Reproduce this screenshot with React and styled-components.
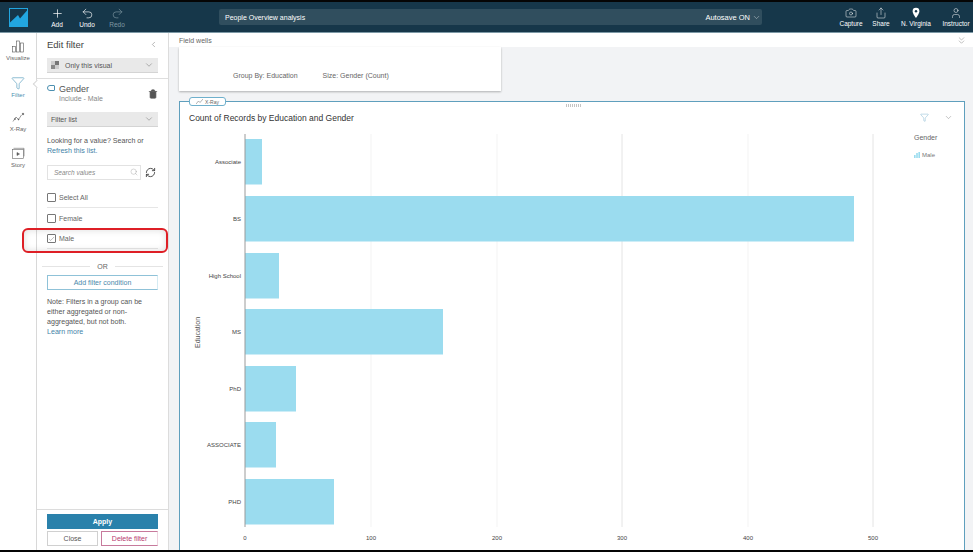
import React from 'react';
import styled, { createGlobalStyle } from 'styled-components';
import { Plus, Undo2, Redo2, ChevronDown, ChevronLeft, ChevronsDown, Camera, Share, User, Filter, Trash2, Search, RefreshCw, Check } from 'lucide-react';

const Global = createGlobalStyle`
  html, body { margin: 0; padding: 0; height: 552px; overflow: hidden; background: #fff; }
  body { font-family: "Liberation Sans", Arial, sans-serif; color: #444; -webkit-font-smoothing: antialiased; }
  * { box-sizing: border-box; }
`;

const Page = styled.div`
  width: 973px; height: 552px; display: flex; flex-direction: column;
  border-top: 2px solid #050505; border-bottom: 2px solid #050505; overflow: hidden;
`;
const Header = styled.header`
  height: 31px; flex: none; background: #16374a; border-bottom: 1px solid #7d99a6;
  display: flex; align-items: center; color: #fff;
`;
const Logo = styled.svg`width: 19px; height: 19px; margin-left: 9px; margin-right: 14px; flex: none;`;
const HeadAction = styled.div`
  width: ${p => p.$w || 30}px; display: flex; flex-direction: column; align-items: center; gap: 1px;
  font-size: 6.5px; line-height: 7px; color: ${p => p.$off ? '#7f97a3' : '#fff'}; white-space: nowrap;
`;
const TitleBar = styled.div`
  width: 543px; height: 16px; margin-left: 87px; background: #304e5e; border-radius: 2px;
  display: flex; align-items: center; justify-content: space-between; padding: 0 1px 0 6px;
  font-size: 7px; color: #fff;
`;
const Autosave = styled.span`display: flex; align-items: center; gap: 2px; font-size: 7.5px;`;
const HeadRight = styled.div`margin-left: auto; display: flex;`;

const Body = styled.div`flex: 1; display: flex; min-height: 0;`;
const Rail = styled.nav`
  position: relative; z-index: 1;
  width: 37px; flex: none; background: #fff; border-right: 1px solid #d8d8d8;
  display: flex; flex-direction: column; align-items: center; padding-top: 7px; gap: 12.7px;
`;
const RailNotch = styled.span`
  position: absolute; right: -4px; top: 48px; width: 6px; height: 6px; background: #fff;
  border-left: 1px solid #d8d8d8; border-bottom: 1px solid #d8d8d8; transform: rotate(45deg);
`;
const RailItem = styled.div`
  display: flex; flex-direction: column; align-items: center; gap: 2px; height: 23px;
  font-size: 6px; line-height: 7px; color: ${p => p.$active ? '#4b8fb0' : '#666'};
`;
const Panel = styled.aside`
  width: 132px; flex: none; background: #fff; border-right: 1px solid #dcdcdc;
  display: flex; flex-direction: column; font-size: 7px; color: #555;
`;
const PanelInner = styled.div`padding: 0 10px; `;
const PanelHead = styled.div`
  height: 25px; padding: 0 10px 2px; display: flex; align-items: center; justify-content: space-between;
  font-size: 9.5px; color: #444;
`;
const SelectBox = styled.div`
  height: 15px; margin-top: ${p => p.$top || 0}px; background: #e9e9e9; display: flex; align-items: center; justify-content: space-between;
  padding: 0 4px; font-size: 7px; color: #555; border-bottom: 1px solid #d4d4d4;
`;
const SelectLabel = styled.span`display: flex; align-items: center; gap: 6px;`;
const Swatch = styled.span`
  width: 8px; height: 8px; flex: none;
  background: conic-gradient(#777 0 25%, #ccc 0 50%, #888 0 75%, #ccc 0);
`;
const Divider = styled.div`height: 1px; background: #dedede; margin-top: 5px;`;
const FilterHead = styled.div`
  display: flex; justify-content: space-between; align-items: center; padding: 2px 10px 0; height: 28px;
`;
const FieldTitle = styled.div`font-size: 9px; line-height: 10px; color: #555; display: flex; align-items: center; gap: 4px;`;
const FieldTag = styled.span`width: 8px; height: 6px; border: 1px solid #4b8fb0; border-radius: 3px 1px 1px 3px; display: block; margin-top: -2px;`;
const FieldSub = styled.div`font-size: 7px; line-height: 10px; color: #888; margin-left: 12px;`;
const Para = styled.p`margin: ${p => p.$m || 0}; font-size: 7.1px; line-height: 9.8px; color: #555;`;
const LinkText = styled.span`color: #3f83a8;`;
const SearchRow = styled.div`display: flex; align-items: center; margin-top: 8px; gap: 4px;`;
const SearchBox = styled.div`
  width: 94px; height: 15px; border: 1px solid #e2e2e2; display: flex; align-items: center; justify-content: space-between;
  padding: 0 2px 0 6px; font-style: italic; font-size: 6.5px; color: #888;
`;
const CheckList = styled.div`margin-top: 8px;`;
const CheckRow = styled.div`
  position: relative; display: flex; align-items: center; gap: 3px; height: 20.6px; font-size: 7px; color: #666;
  border-bottom: ${p => p.$line ? '1px solid #e6e6e6' : 'none'};
`;
const Box = styled.span`
  width: 9px; height: 9px; border: 1px solid #777; border-radius: 1px; display: flex; align-items: center; justify-content: center; flex: none; color: #444;
`;
const Highlight = styled.div`
  position: absolute; z-index: 2; left: -25px; right: -10px; top: -1px; height: 25px;
  border: 2px solid #de1f26; border-radius: 6px;
  box-shadow: inset 0 0 7px rgba(0,0,0,.14);
  pointer-events: none;
`;
const OrLine = styled.div`
  display: flex; align-items: center; gap: 7px; margin: 13px -5px 0; font-size: 7px; line-height: 9px; color: #666;
  &::before, &::after { content: ''; flex: 1; height: 1px; background: #e4e4e4; }
`;
const AddButton = styled.div`
  height: 15px; margin-top: 4px; border: 1px solid #8fc2d8; border-right-color: #d5ebf3; display: flex; align-items: center; justify-content: center;
  font-size: 7px; color: #4a88aa;
`;
const PanelFoot = styled.div`
  margin-top: auto; border-top: 1px solid #dcdcdc; padding: 4px 10px 4px; display: flex; flex-direction: column; gap: 2px;
`;
const ApplyBtn = styled.div`
  height: 15px; background: #2a81ab; color: #fff; font-size: 7px; font-weight: 700; display: flex; align-items: center; justify-content: center;
`;
const FootRow = styled.div`display: flex; gap: 3px;`;
const FootBtn = styled.div`
  flex: ${p => p.$grow}; height: 15px; border: 1px solid ${p => p.$danger ? '#c77a9c' : '#d0d0d0'};
  border-right-color: ${p => p.$danger ? '#eed4e0' : '#d0d0d0'};
  color: ${p => p.$danger ? '#b83a70' : '#555'}; font-size: 7px; display: flex; align-items: center; justify-content: center;
`;

const Main = styled.main`flex: 1; min-width: 0; background: #f2f3f5; display: flex; flex-direction: column;`;
const WellsBar = styled.div`
  height: 14px; flex: none; background: #fff; display: flex; align-items: center; justify-content: space-between;
  padding: 0 6px 0 10px; font-size: 7px; color: #666;
`;
const Canvas = styled.div`flex: 1; padding: 0 8px 0 10px; display: flex; flex-direction: column; min-height: 0;`;
const WellsCard = styled.div`
  width: 322px; height: 44px; flex: none; background: #fff; box-shadow: 0 1px 2px rgba(0,0,0,.28);
  display: flex; gap: 25px; padding: 24px 0 0 54px; font-size: 7px; line-height: 9px; color: #666;
`;
const ChartCard = styled.section`
  position: relative; flex: 1; margin-top: 10px; background: #fff; border: 1px solid #5f9fbd; border-bottom: none;
  display: flex; flex-direction: column; min-height: 0;
`;
const XRayTag = styled.div`
  position: absolute; left: 9px; top: -5px; width: 37px; height: 9px; background: #fff; border: 1px solid #6fb0cc; border-radius: 3px;
  display: flex; align-items: center; justify-content: center; gap: 2px; font-size: 5px; color: #666;
`;
const Grip = styled.div`
  position: absolute; left: 386px; top: 2px; width: 16px; height: 3px;
  background: repeating-linear-gradient(90deg, #c4c4c4 0 1px, transparent 1px 2px);
`;
const CardHead = styled.div`
  height: 23px; margin-top: 4px; padding: 0 11px 0 9px; flex: none; display: flex; align-items: center; justify-content: space-between;
  font-size: 8.5px; color: #333;
`;
const CardTools = styled.div`display: flex; align-items: center; gap: 15px; color: #666;`;
const ChartRow = styled.div`flex: 1; display: flex; min-height: 0;`;
const ChartSvg = styled.svg`width: 725px; height: 423px; flex: none; display: block; font-family: "Liberation Sans", Arial, sans-serif;`;
const Legend = styled.div`padding: 5px 0 0 9px; font-size: 7px; color: #666;`;
const LegendItem = styled.div`display: flex; align-items: center; gap: 2px; margin-top: 11px; font-size: 6px; color: #777;`;
const LegendMark = styled.svg`width: 6px; height: 6px; flex: none;`;

const bars = [
  ['Associate', 139, 17], ['BS', 196, 609], ['High School', 253, 34], ['MS', 309, 198],
  ['PhD', 366, 51], ['ASSOCIATE', 422, 31], ['PHD', 479, 89],
];
const ticks = [[245, '0'], [371, '100'], [497, '200'], [622, '300'], [748, '400'], [873, '500']];

const Chart = () => (
  <ChartSvg viewBox="180 129 725 423">
    {ticks.slice(1).map(([x]) => <line key={x} x1={x} x2={x} y1="134" y2="527" stroke={x === 622 || x === 873 ? '#e4e4e4' : '#f3f3f3'} strokeWidth="1" />)}
    {bars.map(([n, y, w]) => <rect key={n} x="245" y={y} width={w} height="45.5" fill="#9bdcef" />)}
    <line x1="245" x2="245" y1="134" y2="527" stroke="#9a9a9a" strokeWidth="1" />
    {bars.map(([n, y]) => <text key={n} x="241" y={y + 25} textAnchor="end" fontSize="6" fill="#444">{n}</text>)}
    {ticks.map(([x, t]) => <text key={x} x={x} y="540" textAnchor="middle" fontSize="6" fill="#444">{t}</text>)}
    <text transform="translate(200 348) rotate(-90)" fontSize="7" fill="#555">Education</text>
  </ChartSvg>
);

const VisualIcon = () => (
  <svg width="14" height="13" viewBox="0 0 14 13" fill="none" stroke="#555" strokeWidth=".6">
    <rect x="1.5" y="6.5" width="3" height="5.5" /><rect x="5.5" y="1" width="3" height="11" /><rect x="9.5" y="3" width="3" height="9" />
  </svg>
);
const XRayIcon = () => (
  <svg width="14" height="13" viewBox="0 0 14 13" fill="none" stroke="#555" strokeWidth=".6">
    <path d="M2 10.5 L5 6 L7.5 8.5 L10.5 4" /><circle cx="4" cy="8" r=".5" fill="#555" /><circle cx="7.5" cy="8.5" r=".5" fill="#555" /><circle cx="12" cy="3" r=".8" fill="#555" />
  </svg>
);
const StoryIcon = () => (
  <svg width="14" height="13" viewBox="0 0 14 13" fill="none" stroke="#666" strokeWidth=".6">
    <rect x="1.5" y="2.5" width="11" height="9" /><path d="M2.5 1.3h10.5v8" /><path d="M6 5.5l2.5 1.5-2.5 1.5z" fill="#555" />
  </svg>
);
const PinIcon = () => (
  <svg width="12" height="12" viewBox="0 0 12 12">
    <path d="M6 .8a3.4 3.4 0 0 0-3.4 3.4C2.600 6.500 6 11 6 11s3.400-4.500 3.400-6.800A3.400 3.400 0 0 0 6 .8z" fill="#fff" />
    <circle cx="6" cy="4.200" r="1.200" fill="#16374a" />
  </svg>
);

export default function App() {
  return (
    <Page>
      <Global />
      <Header>
        <Logo viewBox="0 0 19 19">
          <rect width="19" height="19" fill="#22a6e0" />
          <path d="M1 1 H18 V2.500 L11 10.500 L9 7 L1 14.500 Z" fill="#16374a" />
        </Logo>
        <HeadAction><Plus size={13} strokeWidth={1.3} />Add</HeadAction>
        <HeadAction><Undo2 size={13} strokeWidth={1.2} />Undo</HeadAction>
        <HeadAction $off><Redo2 size={13} strokeWidth={1.2} />Redo</HeadAction>
        <TitleBar>
          <span>People Overview analysis</span>
          <Autosave>Autosave ON <ChevronDown size={9} strokeWidth={1} /></Autosave>
        </TitleBar>
        <HeadRight>
          <HeadAction $w={36}><Camera size={12} strokeWidth={1} />Capture</HeadAction>
          <HeadAction $w={24}><Share size={12} strokeWidth={1} />Share</HeadAction>
          <HeadAction $w={46}><PinIcon />N. Virginia</HeadAction>
          <HeadAction $w={34}><User size={12} strokeWidth={1} />Instructor</HeadAction>
        </HeadRight>
      </Header>
      <Body>
        <Rail>
          <RailItem><VisualIcon />Visualize</RailItem>
          <RailItem $active><Filter size={14} strokeWidth={1} color="#3f8fb5" />Filter</RailItem>
          <RailItem><XRayIcon />X-Ray</RailItem>
          <RailItem><StoryIcon />Story</RailItem>
          <RailNotch />
        </Rail>
        <Panel>
          <PanelHead>Edit filter <ChevronLeft size={9} strokeWidth={1} /></PanelHead>
          <PanelInner>
            <SelectBox><SelectLabel><Swatch />Only this visual</SelectLabel><ChevronDown size={10} strokeWidth={1} /></SelectBox>
          </PanelInner>
          <Divider />
          <FilterHead>
            <div>
              <FieldTitle><FieldTag />Gender</FieldTitle>
              <FieldSub>Include - Male</FieldSub>
            </div>
            <Trash2 size={10} strokeWidth={1.6} fill="#555" color="#555" />
          </FilterHead>
          <PanelInner>
            <SelectBox $top={5}>Filter list<ChevronDown size={10} strokeWidth={1} /></SelectBox>
            <Para $m="10px 0 0">Looking for a value? Search or<br /><LinkText>Refresh this list.</LinkText></Para>
            <SearchRow>
              <SearchBox>Search values <Search size={8} strokeWidth={1} /></SearchBox>
              <RefreshCw size={11} strokeWidth={2} color="#444" />
            </SearchRow>
            <CheckList>
              <CheckRow $line><Box />Select All</CheckRow>
              <CheckRow><Box />Female</CheckRow>
              <CheckRow $line><Box><Check size={8} strokeWidth={1.2} /></Box>Male<Highlight /></CheckRow>
            </CheckList>
            <OrLine>OR</OrLine>
            <AddButton>Add filter condition</AddButton>
            <Para $m="8px 0 0">Note: Filters in a group can be<br />either aggregated or non-<br />aggregated, but not both.<br /><LinkText>Learn more</LinkText></Para>
          </PanelInner>
          <PanelFoot>
            <ApplyBtn>Apply</ApplyBtn>
            <FootRow>
              <FootBtn $grow="51">Close</FootBtn>
              <FootBtn $grow="57" $danger>Delete filter</FootBtn>
            </FootRow>
          </PanelFoot>
        </Panel>
        <Main>
          <WellsBar>Field wells <ChevronsDown size={11} strokeWidth={1} color="#777" /></WellsBar>
          <Canvas>
            <WellsCard><span>Group By: Education</span><span>Size: Gender (Count)</span></WellsCard>
            <ChartCard>
              <XRayTag><svg width="7" height="5" viewBox="0 0 7 5" fill="none" stroke="#666" strokeWidth=".5"><path d="M0 5 2.5 2 4 3.5 7 0" /></svg>X-Ray</XRayTag>
              <Grip />
              <CardHead>
                Count of Records by Education and Gender
                <CardTools><Filter size={9} strokeWidth={1} color="#5aa0c0" /><ChevronDown size={9} strokeWidth={1} /></CardTools>
              </CardHead>
              <ChartRow>
                <Chart />
                <Legend>
                  Gender
                  <LegendItem>
                    <LegendMark viewBox="0 0 6 6"><rect x="0" y="3" width="1.6" height="3" fill="#9bdcef" /><rect x="2.2" y="1" width="1.6" height="5" fill="#9bdcef" /><rect x="4.4" y="0" width="1.6" height="6" fill="#9bdcef" /></LegendMark>
                    Male
                  </LegendItem>
                </Legend>
              </ChartRow>
            </ChartCard>
          </Canvas>
        </Main>
      </Body>
    </Page>
  );
}
